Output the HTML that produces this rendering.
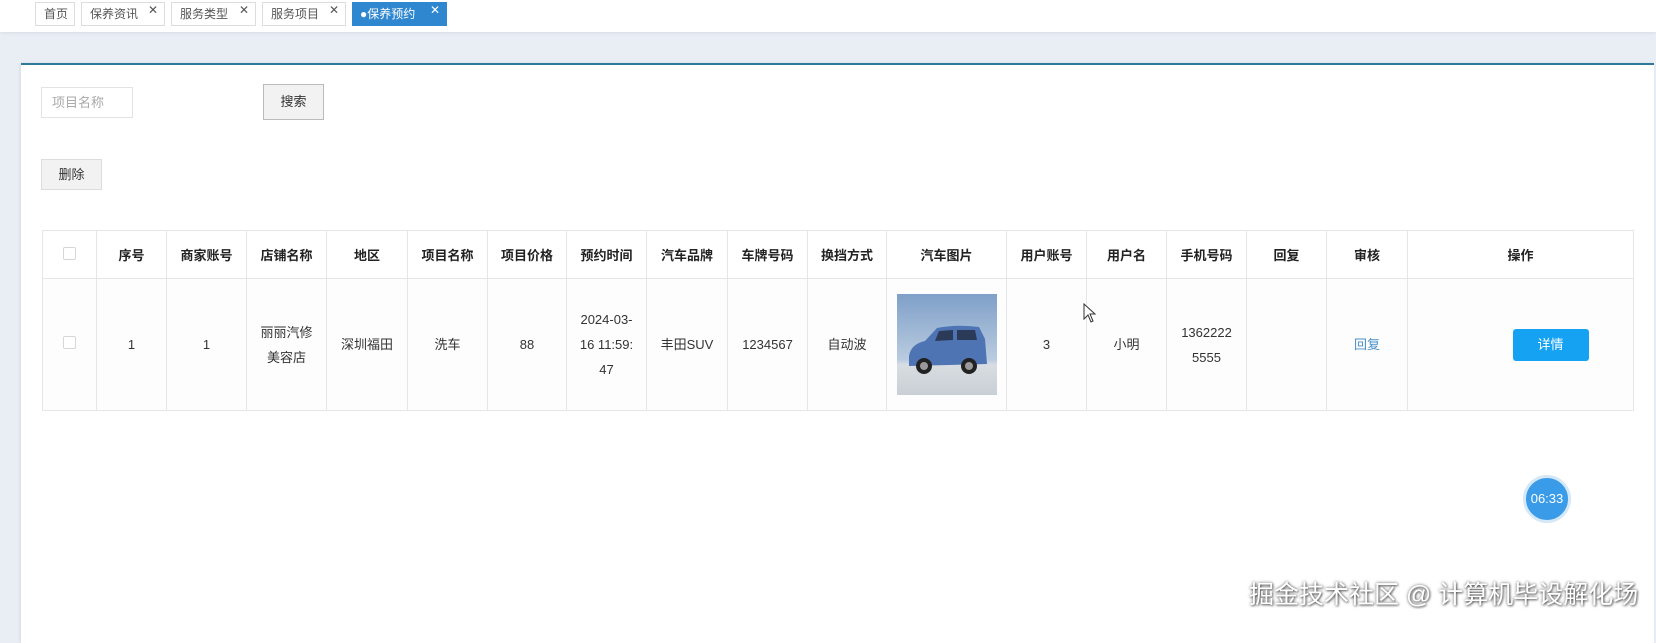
<!DOCTYPE html>
<html><head><meta charset="utf-8"><style>
*{margin:0;padding:0;box-sizing:border-box}
body{width:1656px;height:626px;overflow:hidden;background:#e9edf4;font-family:"Liberation Sans","Noto Sans CJK SC",sans-serif;font-size:13px;color:#333;position:relative}
.top{position:absolute;left:0;top:0;width:1656px;height:32px;background:#fff;box-shadow:0 1px 3px rgba(0,0,0,.08)}
.tab{position:absolute;top:2px;height:24px;border:1px solid #ddd;background:#fff;line-height:22px;padding-left:8px;color:#555;font-size:12px}
.tab .x{position:absolute;right:6px;top:-4px;font-size:12px;color:#555}
.tab.on{background:#2e87cf;border-color:#2e87cf;color:#fff}
.tab.on .x{color:#fff}
.panel{position:absolute;left:21px;top:63px;width:1633px;height:580px;background:#fff;border-top:2px solid #2f7a98;box-shadow:-1px 0 3px rgba(0,0,0,.08)}
.inp{position:absolute;left:41px;top:87px;width:92px;height:31px;border:1px solid #e3e3e3;color:#aaa;padding-left:10px;line-height:29px}
.btn{position:absolute;background:#f2f2f2;border:1px solid #ccc;text-align:center;color:#333}
table{position:absolute;left:42px;top:230px;border-collapse:collapse;table-layout:fixed;width:1591px}
td,th{border:1px solid #e6e6e6;text-align:center;vertical-align:middle;font-size:13px}
th{height:48px;font-weight:bold;color:#222;background:#fff}
td{height:132px;line-height:25px;background:#fdfdfd}
.cb{display:inline-block;width:13px;height:13px;border:1px solid #d6d6d6;border-radius:2px;background:#fff}
</style></head><body>
<div class="top">
<div class="tab" style="left:35px;width:40px">首页</div>
<div class="tab" style="left:81px;width:84px">保养资讯<span class="x">✕</span></div>
<div class="tab" style="left:171px;width:85px">服务类型<span class="x">✕</span></div>
<div class="tab" style="left:262px;width:84px">服务项目<span class="x">✕</span></div>
<div class="tab on" style="left:352px;width:95px;padding-left:7px">●保养预约<span class="x">✕</span></div>
</div>
<div class="panel"></div>
<div class="inp">项目名称</div>
<div class="btn" style="left:263px;top:84px;width:61px;height:36px;line-height:34px;border-color:#bbb">搜索</div>
<div class="btn" style="left:41px;top:159px;width:61px;height:31px;line-height:29px;border-color:#ddd">删除</div>
<table>
<colgroup><col style="width:54px"><col style="width:70px"><col style="width:80px"><col style="width:80px"><col style="width:81px"><col style="width:80px"><col style="width:79px"><col style="width:80px"><col style="width:81px"><col style="width:80px"><col style="width:79px"><col style="width:120px"><col style="width:80px"><col style="width:80px"><col style="width:80px"><col style="width:80px"><col style="width:81px"><col style="width:226px"></colgroup>
<tr><th><span class="cb"></span></th><th>序号</th><th>商家账号</th><th>店铺名称</th><th>地区</th><th>项目名称</th><th>项目价格</th><th>预约时间</th><th>汽车品牌</th><th>车牌号码</th><th>换挡方式</th><th>汽车图片</th><th>用户账号</th><th>用户名</th><th>手机号码</th><th>回复</th><th>审核</th><th>操作</th></tr>
<tr><td><span class="cb"></span></td><td>1</td><td>1</td><td>丽丽汽修<br>美容店</td><td>深圳福田</td><td>洗车</td><td>88</td><td>2024-03-<br>16 11:59:<br>47</td><td>丰田SUV</td><td>1234567</td><td>自动波</td>
<td><svg width="100" height="101" viewBox="0 0 100 101" style="display:block;margin:0 auto">
<defs><linearGradient id="s" x1="0" y1="0" x2="0" y2="1"><stop offset="0" stop-color="#7fa0c8"/><stop offset=".65" stop-color="#b9cbe0"/><stop offset=".7" stop-color="#d8dde2"/><stop offset="1" stop-color="#c9cfd4"/></linearGradient></defs>
<rect width="100" height="101" fill="url(#s)"/>
<path d="M12 62 Q14 50 28 47 L40 34 Q60 30 82 33 L88 45 L90 70 L12 72 Z" fill="#4f74b4"/>
<path d="M42 37 L56 36 L56 46 L38 47 Z M60 36 L78 36 L80 46 L60 46 Z" fill="#2a3a58"/>
<circle cx="27" cy="72" r="8" fill="#222"/><circle cx="27" cy="72" r="4" fill="#999"/>
<circle cx="72" cy="72" r="8" fill="#222"/><circle cx="72" cy="72" r="4" fill="#999"/>
</svg></td>
<td>3</td><td>小明</td><td>1362222<br>5555</td><td></td><td style="color:#4a90c8">回复</td>
<td><span style="display:inline-block;width:76px;height:32px;line-height:32px;background:#16a2f3;color:#fff;border-radius:3px;margin-left:60px">详情</span></td></tr>
</table>
<svg style="position:absolute;left:1083px;top:303px" width="14" height="20" viewBox="0 0 14 20"><path d="M1 1 L1 16 L5 12 L8 19 L10 18 L7 11 L12 11 Z" fill="#fff" stroke="#333" stroke-width="1"/></svg>
<div style="position:absolute;left:1523px;top:475px;width:48px;height:48px;border-radius:50%;background:#3a9be8;border:3px solid #d5e8f8;color:#fff;font-size:13px;text-align:center;line-height:42px">06:33</div>
<div style="position:absolute;left:1249px;top:575px;font-size:25px;color:#fff;text-shadow:0 0 3px rgba(0,0,0,.6),1px 1px 2px rgba(0,0,0,.5);white-space:nowrap">掘金技术社区 @ 计算机毕设解化场</div>
</body></html>
